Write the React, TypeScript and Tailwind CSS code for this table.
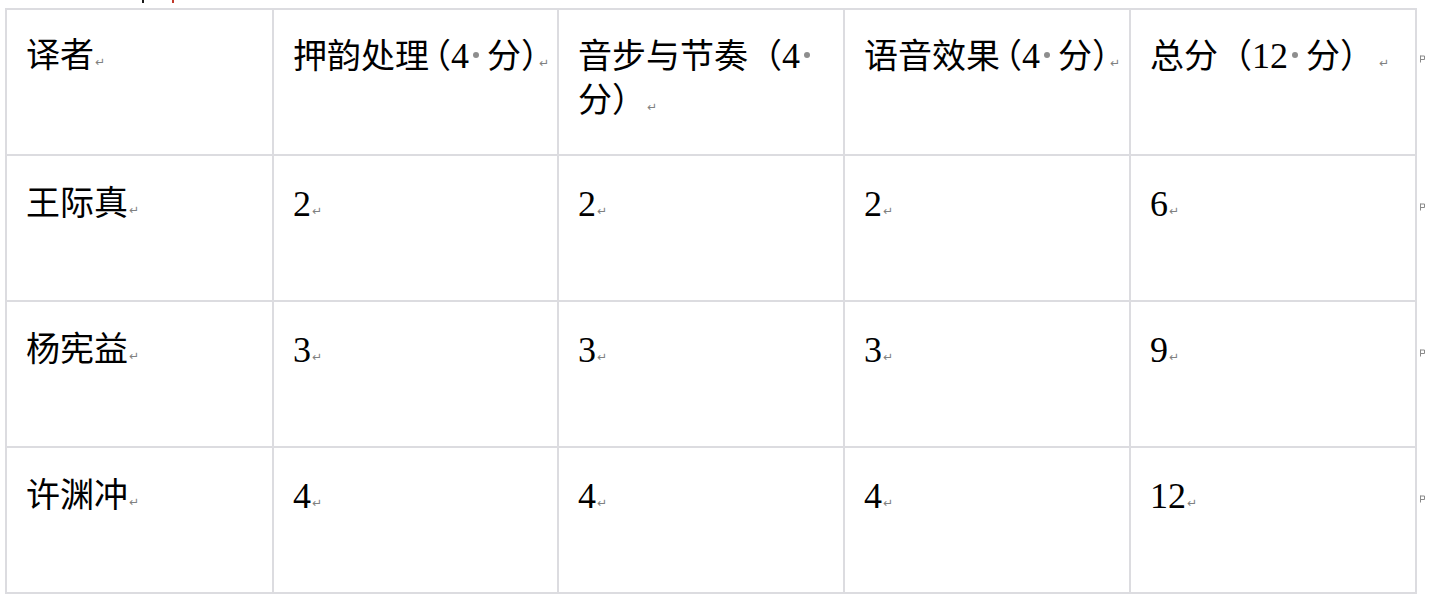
import { Fragment } from "react";

const COL_WIDTHS = ["w-[269px]", "w-[285px]", "w-[286px]", "w-[286px]", "w-[286px]"];

// "(" / ")" = compressed punctuation, as Word squeezes it on tight lines
type Part = string | { num: string } | "SP" | "BR" | "TRAIL" | "(" | ")";

const HEADER: Part[][] = [
  ["译者"],
  ["押韵处理", "(", { num: "4" }, "SP", "分", ")"],
  ["音步与节奏（", { num: "4" }, "SP", "BR", "分）"],
  ["语音效果", "(", { num: "4" }, "SP", "分", ")"],
  ["总分（", { num: "12" }, "SP", "分）", "TRAIL"],
];

const ROWS: { name: string; scores: string[] }[] = [
  { name: "王际真", scores: ["2", "2", "2", "6"] },
  { name: "杨宪益", scores: ["3", "3", "3", "9"] },
  { name: "许渊冲", scores: ["4", "4", "4", "12"] },
];

function SpaceDot() {
  return (
    <span className="inline-block ml-[4px] mr-[8px] w-[6px] h-[6px] rounded-full bg-[#8e8e8e] align-[10px]" />
  );
}

function ParaMark() {
  return (
    <span className="inline-block ml-[1px] text-[12px] leading-none text-[#808080] font-['DejaVu_Sans',sans-serif] align-[1px]">
      ↵
    </span>
  );
}

function RowEnd() {
  return (
    <div className="w-[12px] pl-[2px] pt-[47px]">
      <svg width="7" height="8" viewBox="0 0 7 8" fill="none" stroke="#8a8a8a" strokeWidth="1">
        <path d="M1.5 0.5 V7.5 M1.5 1 H5.5 V4.5 H1.5" />
      </svg>
    </div>
  );
}

function renderParts(parts: Part[]) {
  return parts.map((p, i) => {
    if (p === "SP") return <SpaceDot key={i} />;
    if (p === "BR") return <br key={i} />;
    if (p === "TRAIL") return <span key={i} className="inline-block w-[4px]" />;
    if (p === "(")
      return (
        <span key={i} className="ml-[5px] [font-feature-settings:'halt']">
          （
        </span>
      );
    if (p === ")")
      return (
        <span key={i} className="[font-feature-settings:'halt']">
          ）
        </span>
      );
    if (typeof p === "string") return <Fragment key={i}>{p}</Fragment>;
    return (
      <span key={i} className="text-[36px]">
        {p.num}
      </span>
    );
  });
}

function Cell({
  col,
  first,
  children,
}: {
  col: number;
  first: boolean;
  children: React.ReactNode;
}) {
  const base =
    "border-[#dcdce0] border-r-2 border-b-2 pl-[19px] pr-[4px] text-[34px] leading-[44px] text-black shrink-0";
  const left = col === 0 ? "border-l-2" : "";
  const top = first ? "h-[148px] border-t-2 pt-[24px]" : "h-[146px] pt-[26px]";
  return (
    <div className={`${COL_WIDTHS[col]} ${base} ${left} ${top}`}>
      <div className="whitespace-nowrap">{children}</div>
    </div>
  );
}

export default function App() {
  return (
    <div className="w-[1429px] h-[610px] bg-white overflow-hidden font-['Liberation_Serif','Noto_Sans_CJK_SC',serif]">
      {/* remains of the line above, cut off by the screenshot */}
      <div className="h-[8px] flex items-start">
        <span className="ml-[142px] w-[2px] h-[3px] bg-[#1a1a1a]" />
        <span className="ml-[28px] w-[2px] h-[3px] bg-[#c0392b]" />
      </div>

      <div className="ml-[5px] flex flex-col">
        <div className="flex">
          {HEADER.map((parts, c) => (
            <Cell key={c} col={c} first>
              {renderParts(parts)}
              <ParaMark />
            </Cell>
          ))}
          <RowEnd />
        </div>

        {ROWS.map((row) => (
          <div key={row.name} className="flex">
            <Cell col={0} first={false}>
              {row.name}
              <ParaMark />
            </Cell>
            {row.scores.map((s, c) => (
              <Cell key={c} col={c + 1} first={false}>
                <span className="text-[36px]">{s}</span>
                <ParaMark />
              </Cell>
            ))}
            <RowEnd />
          </div>
        ))}
      </div>
    </div>
  );
}
